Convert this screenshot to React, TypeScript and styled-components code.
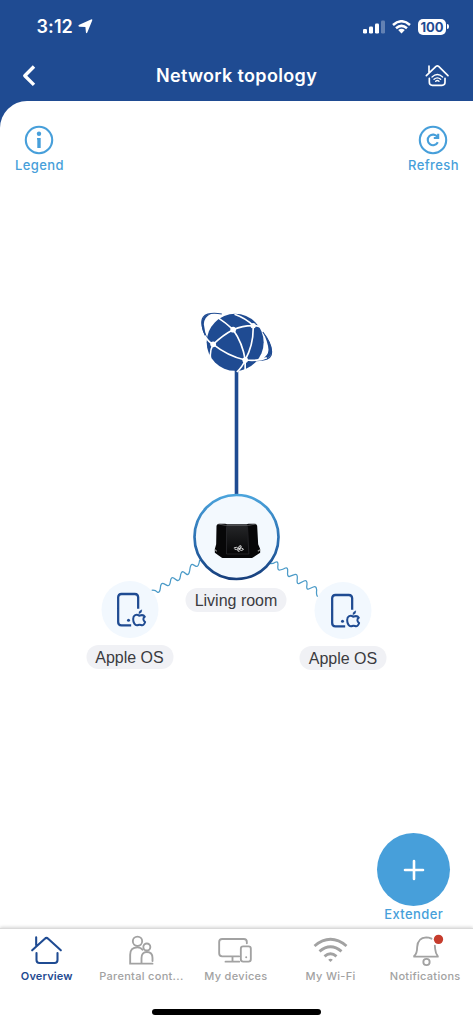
import React from "react";
import styled, { createGlobalStyle } from "styled-components";

const Global = createGlobalStyle`
  * { box-sizing: border-box; }
  body { margin: 0; background: #fff; font-family: Inter, "Liberation Sans", sans-serif; }
  svg { display: block; flex: none; }
`;

const navy = "#1f4b92";
const sky = "#479fda";

const Screen = styled.div`
  width: 473px;
  height: 1024px;
  display: flex;
  flex-direction: column;
  overflow: hidden;
  background: ${navy};
`;
const StatusBar = styled.div`
  height: 50px;
  padding: 3px 24px 0 36.5px;
  display: flex;
  align-items: center;
  justify-content: space-between;
  color: #fff;
`;
const StatusGroup = styled.div<{ $gap: number }>`
  display: flex;
  align-items: center;
  gap: ${(p) => p.$gap}px;
`;
const Clock = styled.span`
  font-size: 18px;
  line-height: 22px;
  font-weight: 600;
  letter-spacing: 0.1px;
`;
const Battery = styled.span`
  width: 28px;
  height: 16px;
  border-radius: 5px;
  background: #fff;
  color: ${navy};
  font-size: 13px;
  line-height: 16px;
  font-weight: 700;
  text-align: center;
`;
const BatteryTip = styled.span`
  width: 2px;
  height: 5px;
  margin-left: 1px;
  border-radius: 0 2px 2px 0;
  background: #fff;
`;
const NavBar = styled.div`
  height: 51px;
  padding: 0 23px 0 20px;
  display: flex;
  align-items: center;
  justify-content: space-between;
`;
const Title = styled.h1`
  margin: 1px 0 0 3px;
  color: #fff;
  font-size: 18px;
  font-weight: 600;
  line-height: 24px;
  letter-spacing: 0.33px;
`;
const Panel = styled.main`
  flex: 1;
  display: flex;
  flex-direction: column;
  background: #fff;
  border-top-left-radius: 27px;
`;
const Actions = styled.div`
  height: 80px;
  padding: 24px 14.5px 0 15px;
  display: flex;
  justify-content: space-between;
`;
const Action = styled.div`
  display: flex;
  flex-direction: column;
  align-items: center;
  gap: 2px;
`;
const ActionLabel = styled.span`
  color: ${sky};
  font-size: 13px;
  font-weight: 500;
  line-height: 17px;
  letter-spacing: 0.4px;
  margin-right: -0.4px;
`;
const Canvas = styled.div`
  position: relative;
  height: 652px;
`;
const Node = styled.div<{ $x: number; $y: number }>`
  position: absolute;
  left: ${(p) => p.$x}px;
  top: ${(p) => p.$y}px;
  transform: translateX(-50%);
  display: flex;
  flex-direction: column;
  align-items: center;
`;
const Links = styled.svg`
  position: absolute;
  left: 0;
  top: 0;
`;
const Chip = styled.span<{ $w: number; $gap: number }>`
  width: ${(p) => p.$w}px;
  height: 24px;
  margin-top: ${(p) => p.$gap}px;
  border-radius: 12px;
  background: #f0f1f5;
  color: #3b3b3f;
  font-family: "Liberation Sans", sans-serif;
  font-size: 16px;
  line-height: 25px;
  text-align: center;
  white-space: nowrap;
`;
const DeviceDisc = styled.div`
  width: 57px;
  height: 57px;
  border-radius: 50%;
  background: #f2f8fe;
  display: flex;
  align-items: center;
  justify-content: center;
`;
const AddButton = styled.button`
  width: 73px;
  height: 73px;
  padding: 0;
  border: 0;
  border-radius: 50%;
  background: ${sky};
  display: flex;
  align-items: center;
  justify-content: center;
`;
const Extender = styled.div`
  height: 95px;
  display: flex;
  flex-direction: column;
  align-items: center;
  align-self: flex-end;
  margin-right: 23px;
`;
const TabBar = styled.nav`
  flex: 1;
  padding: 4px 0 0;
  border-top: 1px solid #dadada;
  box-shadow: 0 -1px 3px rgba(0, 0, 0, 0.16);
  background: #fff;
  display: flex;
  flex-direction: column;
  align-items: center;
`;
const Tabs = styled.div`
  width: 100%;
  height: 76px;
  display: grid;
  grid-template-columns: repeat(5, 94.6px);
`;
const Tab = styled.div<{ $active?: boolean }>`
  display: flex;
  flex-direction: column;
  align-items: center;
  color: ${(p) => (p.$active ? navy : "#a2a2a2")};
  font-size: 11px;
  font-weight: ${(p) => (p.$active ? 600 : 500)};
  line-height: 15px;
  letter-spacing: ${(p) => (p.$active ? 0.15 : 0.3)}px;
  white-space: nowrap;
  transform: translateX(-0.5px);
`;
const HomeIndicator = styled.div`
  width: 169px;
  height: 6px;
  border-radius: 3px;
  background: #000;
`;

const HeaderHouse = () => (
  <svg width="26" height="24" viewBox="0 0 78 72" fill="none" stroke="#fff" strokeWidth="5" strokeLinecap="round" strokeLinejoin="round">
    <path d="M7 35L36 7Q40 4 44 7L72 35M15 25V6M16 43V55Q16 64 25 64H54Q63 64 63 55V43" />
    <path d="M24 39Q40 24 56 39M30 46Q40 37 50 46M35 52Q40 47 45 52" strokeWidth="4" />
  </svg>
);

const Globe = () => (
  <svg width="95" height="85" viewBox="0 0 285 255">
    <path d="M94 42C62 36 34 41 34 66C34 84 42 104 53 121M217 96C235 119 247 145 242 165C237 181 208 184 171 180" fill="none" stroke={navy} strokeWidth="3.5" />
    <path d="M218 98Q240 125 244 150Q245 177 211 180Q234 167 234 149Q232 124 218 98Z" fill={navy} />
    <path d="M52 120Q34 96 33 70Q34 44 62 41Q40 51 40 73Q42 96 52 120Z" fill={navy} />
    <circle cx="134" cy="127" r="85.5" fill={navy} />
    <g fill="none" stroke="#fff" strokeWidth="5">
      <path d="M82 53Q104 67 128 89Q160 76 188 77Q208 76 222 91M128 89Q98 104 68 133Q53 126 43 107M68 133Q112 168 164 180Q205 184 229 173M128 89Q157 130 164 180M188 77Q190 133 164 180Q157 199 139 216M188 77Q166 55 132 43M164 180V213M68 133Q57 152 60 174" />
    </g>
    <g fill="#fff"><circle cx="128" cy="89" r="8.5" /><circle cx="188" cy="77" r="8" /><circle cx="68" cy="133" r="8.5" /><circle cx="164" cy="180" r="8.5" /></g>
  </svg>
);

const Router = () => (
  <svg width="88" height="88" viewBox="0 0 264 264">
    <defs>
      <linearGradient id="ring" x1="0" y1="0" x2="0" y2="1"><stop offset="0" stopColor="#4ba4dc" /><stop offset="0.6" stopColor="#2869ac" /><stop offset="1" stopColor="#173f7c" /></linearGradient>
      <linearGradient id="body" x1="0" y1="0" x2="0" y2="1"><stop offset="0" stopColor="#252628" /><stop offset="1" stopColor="#050506" /></linearGradient>
    </defs>
    <circle cx="132" cy="132" r="126" fill="#f3f9fe" stroke="url(#ring)" strokeWidth="8" />
    <path d="M72 98Q73 92 82 92H98L104 94H162L168 92H184Q193 92 194 98L197 154L203 168V179L180 194Q178 195 173 195H95Q90 195 88 194L67 179V168L71 154Z" fill="#070708" />
    <path d="M103 97H163L169 184H101Z" fill="url(#body)" />
    <path d="M77 93L99 97H168L190 93" fill="none" stroke="#77797c" strokeWidth="2" />
    <path d="M102 100V183M165 100L169 183M102 183H169" fill="none" stroke="#303135" strokeWidth="2" />
    <path d="M67 170L73 175M203 170L196 175" stroke="#999" strokeWidth="3.5" />
    <path d="M124 165Q133 160 138 167Q132 172 126 168M138 167Q138 157 145 158Q149 162 141 167M139 167Q149 162 153 169Q149 176 139 169M137 169Q133 176 141 175" fill="none" stroke="#ddd" strokeWidth="3" />
  </svg>
);

const PhoneApple = () => (
  <svg width="34" height="40" viewBox="0 0 102 120" fill="none" stroke={navy} strokeWidth="6.8" strokeLinecap="butt" strokeLinejoin="round">
    <path d="M77 56V22Q77 12 67 12H27Q17 12 17 22V96Q17 106 27 106H56" />
    <circle cx="48" cy="91" r="4.5" fill={navy} stroke="none" />
    <path d="M80 77C72 71 62 75 62 87C62 99 68 106 73 106C77 106 77 104 81 104C85 104 86 106 89 106C93 106 96 101 98 96C91 92 91 84 97 80C92 72 84 76 80 77Z" strokeWidth="6" />
    <path d="M79 71Q78 62 88 59Q89 69 79 71Z" fill={navy} strokeWidth="1" />
  </svg>
);

const HomeIcon = () => (
  <svg width="36" height="36" viewBox="0 0 108 108" fill="none" stroke="currentColor" strokeWidth="6.2" strokeLinecap="round" strokeLinejoin="round">
    <path d="M11 52L49 17Q54 12 59 17L97 52M23 37V13M24 60V81Q24 90 33 90H78Q87 90 87 81V60" />
  </svg>
);
const FamilyIcon = () => (
  <svg width="36" height="36" viewBox="0 0 108 108" fill="none" stroke="currentColor" strokeWidth="5.6" strokeLinecap="round">
    <circle cx="42" cy="25" r="14" /><circle cx="70" cy="42" r="10.5" />
    <path d="M54 92H20V65Q20 43 42 43Q52 43 57 50M87 92H54V75Q54 57 70 57Q87 57 87 75V84" />
  </svg>
);
const DevicesIcon = () => (
  <svg width="36" height="36" viewBox="0 0 108 108" fill="none" stroke="currentColor" strokeWidth="5.6" strokeLinecap="round">
    <path d="M88 31V27Q88 18 79 18H14Q5 18 5 27V61Q5 70 14 70H65M45 71V85M24 86H65" />
    <rect x="70" y="40" width="30" height="46" rx="7" /><circle cx="86" cy="73" r="3" fill="currentColor" stroke="none" />
  </svg>
);
const WifiIcon = () => (
  <svg width="36" height="36" viewBox="0 0 108 108" fill="none" stroke="currentColor" strokeWidth="8.5">
    <path d="M6 39Q54 -1 102 39M21 55Q54 27 87 55M36 70Q54 55 72 70" />
    <path d="M47 80Q54 75 61 80L54 87Z" fill="currentColor" stroke="none" />
  </svg>
);
const BellIcon = () => (
  <svg width="36" height="36" viewBox="0 0 108 108" fill="none" stroke="currentColor" strokeWidth="5.6" strokeLinecap="round" strokeLinejoin="round">
    <path d="M72 17Q64 13 56 13Q31 14 29 42Q29 62 20 69V71H91M91 70Q84 61 83 48L82 38" />
    <circle cx="57" cy="87" r="9.5" />
    <circle cx="93" cy="19" r="14" fill="#c63c2d" stroke="none" />
  </svg>
);

export default function App() {
  return (
    <Screen>
      <Global />
      <StatusBar>
        <StatusGroup $gap={5}>
          <Clock>3:12</Clock>
          <svg width="15" height="15" viewBox="0 0 15 15"><path d="M14.2 1.4L9.3 13.5Q8.4 15 7.9 13.3L7.4 8.1L1.4 7.7Q-.6 7 1.3 5.8L13 .5Q14.8 -.1 14.2 1.4Z" fill="#fff" /></svg>
        </StatusGroup>
        <StatusGroup $gap={7}>
          <svg width="22" height="14" viewBox="0 0 22 14" fill="#fff"><rect x="0" y="9" width="4" height="4.5" rx="1.2" /><rect x="6" y="6.5" width="4" height="7" rx="1.2" /><rect x="12" y="3.5" width="4" height="10" rx="1.2" /><rect x="18" y=".5" width="4" height="13" rx="1.2" opacity=".3" /></svg>
          <svg width="19" height="14" viewBox="0 0 19 14" fill="none" stroke="#fff" strokeWidth="2.5"><path d="M1 5Q9.5 -2.5 18 5M4 8.3Q9.5 3.5 15 8.3" /><path d="M6.2 10Q9.5 7.3 12.8 10L9.5 13.5Z" fill="#fff" stroke="none" /></svg>
          <StatusGroup $gap={0}><Battery>100</Battery><BatteryTip /></StatusGroup>
        </StatusGroup>
      </StatusBar>
      <NavBar>
        <svg width="26" height="26" viewBox="0 0 26 26"><path d="M14 3.5L4.8 12.7L14 21.9" fill="none" stroke="#fff" strokeWidth="3.4" strokeLinejoin="round" /></svg>
        <Title>Network topology</Title>
        <HeaderHouse />
      </NavBar>
      <Panel>
        <Actions>
          <Action>
            <svg width="30" height="30" viewBox="0 0 30 30"><circle cx="15" cy="15" r="13.2" fill="none" stroke={sky} strokeWidth="2.1" /><circle cx="15" cy="8.8" r="2.2" fill={sky} /><path d="M13 13H16.7V23H13.3V14.5H13Z" fill={sky} /></svg>
            <ActionLabel>Legend</ActionLabel>
          </Action>
          <Action>
            <svg width="30" height="30" viewBox="0 0 30 30" fill="none" stroke={sky} strokeWidth="2.1"><circle cx="15" cy="15" r="13.2" /><path d="M19.8 17.3A5.3 5.3 0 1 1 19.5 12M20.2 8.8V13H15.8" /></svg>
            <ActionLabel>Refresh</ActionLabel>
          </Action>
        </Actions>
        <Canvas>
          <Links width="473" height="652" viewBox="0 181 473 652" fill="none">
            <path d="M236.5 368V496" stroke={navy} strokeWidth="3.6" />
            <g stroke="#4c9bc8" strokeWidth="3.8">
              <path transform="translate(145 550) scale(.3333)" d="M20 121Q30 119 38 127Q44 129 46 115Q47 97 56 101L66 106Q74 110 76 96Q78 79 86 84L96 91Q104 94 106 80Q108 62 116 66L125 73Q132 76 134 62Q136 40 144 44L153 49Q161 52 164 30" />
              <path transform="translate(265 550) scale(.3333)" d="M14 41Q24 42 31 37Q39 32 39 44Q36 62 45 60Q54 58 61 54Q69 51 68 64Q66 82 74 79L88 74Q98 70 97 84Q94 104 103 100L117 93Q127 89 126 103Q123 120 131 117L145 111Q154 107 155 120Q153 135 158 140" />
            </g>
          </Links>
          <Node $x={237.5} $y={119}><Globe /></Node>
          <Node $x={236} $y={311.5}><Router /><Chip $w={101} $gap={7}>Living room</Chip></Node>
          <Node $x={129.5} $y={400}><DeviceDisc><PhoneApple /></DeviceDisc><Chip $w={87} $gap={7}>Apple OS</Chip></Node>
          <Node $x={343} $y={401}><DeviceDisc><PhoneApple /></DeviceDisc><Chip $w={87} $gap={7}>Apple OS</Chip></Node>
        </Canvas>
        <Extender>
          <AddButton aria-label="Add extender"><svg width="22" height="22" viewBox="0 0 22 22"><path d="M11 2V20M2 11H20" stroke="#fff" strokeWidth="2.6" strokeLinecap="round" /></svg></AddButton>
          <ActionLabel>Extender</ActionLabel>
        </Extender>
        <TabBar>
          <Tabs>
            <Tab $active><HomeIcon />Overview</Tab>
            <Tab><FamilyIcon />Parental cont...</Tab>
            <Tab><DevicesIcon />My devices</Tab>
            <Tab><WifiIcon />My Wi-Fi</Tab>
            <Tab><BellIcon />Notifications</Tab>
          </Tabs>
          <HomeIndicator />
        </TabBar>
      </Panel>
    </Screen>
  );
}
